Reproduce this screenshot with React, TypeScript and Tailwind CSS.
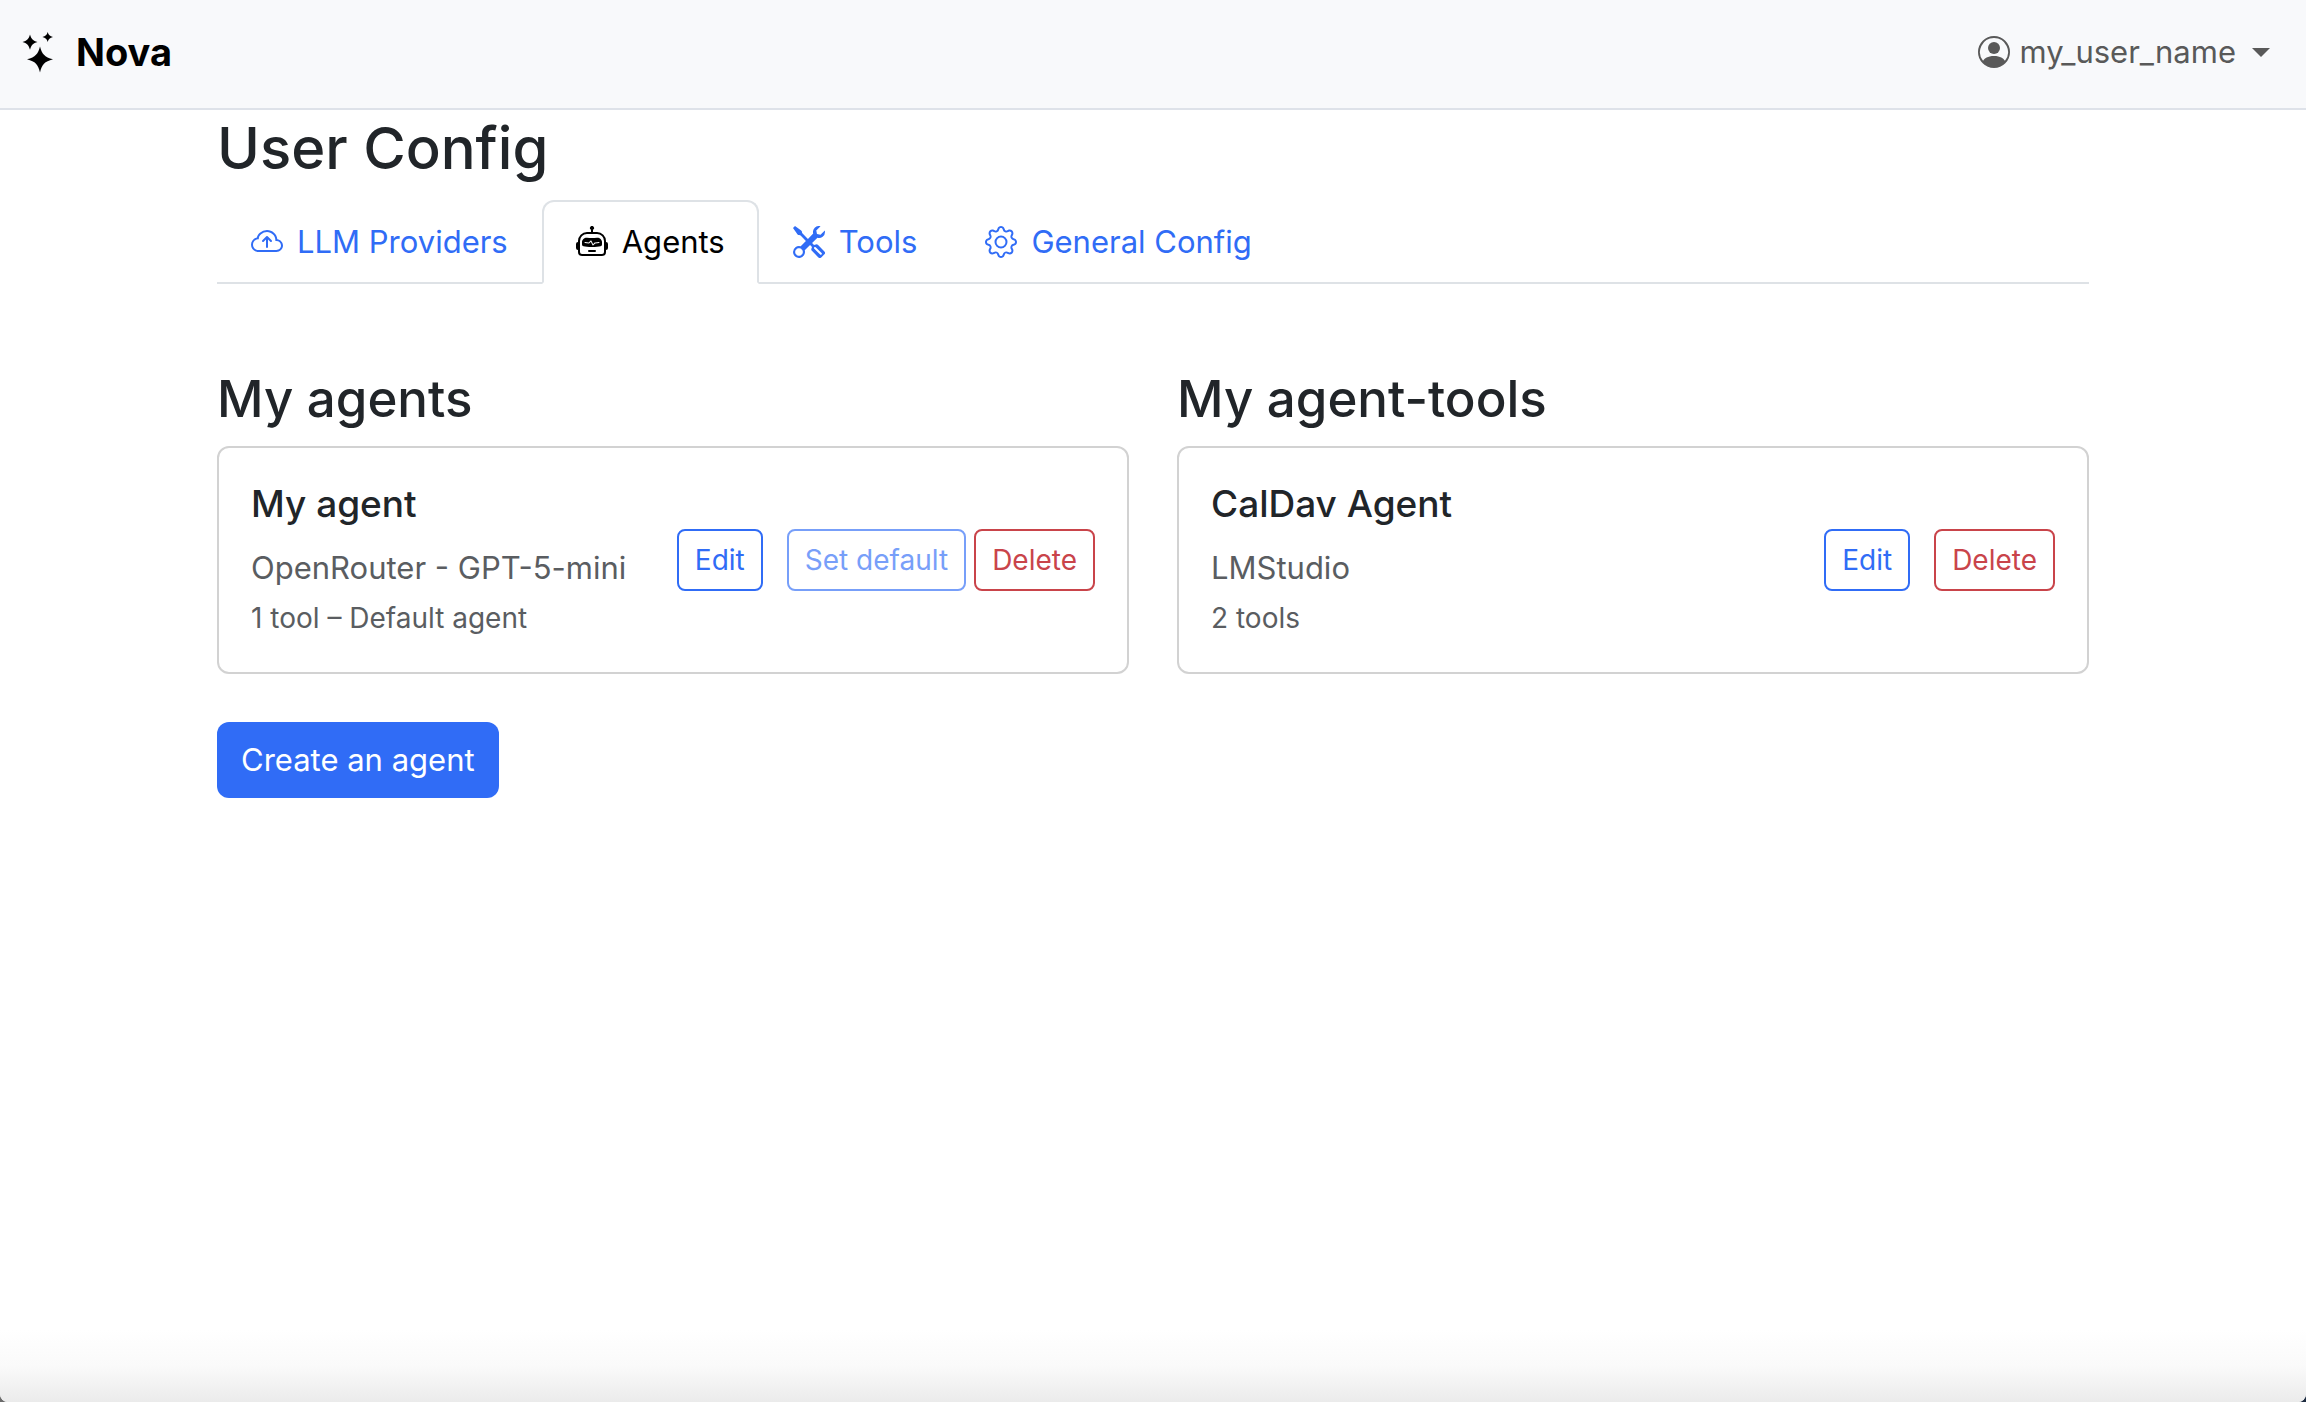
import React from "react";
import type { ReactNode } from "react";
import { BsCloudArrowUp, BsGear, BsPersonCircle, BsRobot, BsTools } from "react-icons/bs";

type Agent = {
  name: string;
  provider: string;
  summary: string;
  canBeDefault?: boolean;
};

const agents: Agent[] = [
  { name: "My agent", provider: "OpenRouter - GPT-5-mini", summary: "1 tool – Default agent", canBeDefault: true },
];

const agentTools: Agent[] = [{ name: "CalDav Agent", provider: "LMStudio", summary: "2 tools" }];

const tabs: { label: string; href: string; icon: ReactNode; active?: boolean }[] = [
  { label: "LLM Providers", href: "#providers", icon: <BsCloudArrowUp aria-hidden="true" /> },
  { label: "Agents", href: "#agents", icon: <BsRobot aria-hidden="true" />, active: true },
  { label: "Tools", href: "#tools", icon: <BsTools aria-hidden="true" /> },
  { label: "General Config", href: "#general", icon: <BsGear aria-hidden="true" /> },
];

function NovaLogo() {
  return (
    <svg className="h-[42px] w-8 shrink-0" viewBox="0 0 32 42" fill="currentColor" aria-hidden="true">
      <path d="M18 15.5C19.8 23 22.5 26 31 28.3C22.5 30.6 19.8 33.6 18 41.5C16.2 33.6 13.5 30.6 5 28.3C13.5 26 16.2 23 18 15.5Z" />
      <path d="M8 3.5C9.2 8 11.2 9.7 15.5 11C11.2 12.3 9.2 14 8 18.8C6.8 14 4.8 12.3 0.5 11C4.8 9.7 6.8 8 8 3.5Z" />
      <path d="M25.7 1C26.5 4 27.8 5.1 31 6C27.8 6.9 26.5 8 25.7 11C24.9 8 23.6 6.9 20.4 6C23.6 5.1 24.9 4 25.7 1Z" />
    </svg>
  );
}

function Header() {
  return (
    <header className="flex items-center justify-between border-b-2 border-[#dee2e9] bg-[#f8f9fb] pt-4 pr-9 pb-5 pl-[22px]">
      <a href="#home" className="flex items-center gap-[22px] text-[38px] leading-[72px] font-bold text-black">
        <NovaLogo />
        Nova
      </a>
      <button type="button" aria-haspopup="menu" className="flex items-center text-[31px] leading-[48px] text-[#595959]">
        <BsPersonCircle className="mr-2.5 size-8" aria-hidden="true" />
        my_user_name
        <svg className="ml-4 h-[9px] w-[18px]" viewBox="0 0 18 9" fill="currentColor" aria-hidden="true">
          <path d="M0 0H18L9 9Z" />
        </svg>
      </button>
    </header>
  );
}

function Tabs() {
  return (
    <nav aria-label="User config" className="flex border-b-2 border-[#dee2e6]">
      {tabs.map((tab) => (
        <a
          key={tab.label}
          href={tab.href}
          aria-current={tab.active ? "page" : undefined}
          className={
            "-mb-0.5 flex items-center gap-3.5 rounded-t-xl border-2 px-8 py-4 text-[31px] leading-[48px] " +
            (tab.active
              ? "border-[#dee2e6] border-b-white bg-white text-black"
              : "border-transparent text-[#306cf6]")
          }
        >
          <span className="[&>svg]:size-8">{tab.icon}</span>
          {tab.label}
        </a>
      ))}
    </nav>
  );
}

const smallButton = "rounded-lg border-2 px-4 py-2 text-[28px] leading-[42px]";

function AgentCard({ agent }: { agent: Agent }) {
  return (
    <article className="flex items-center justify-between rounded-xl border-2 border-[#d2d2d2] p-8">
      <div>
        <h3 className="mb-4 text-[37px] leading-[48px] font-medium text-[#212529]">{agent.name}</h3>
        <p className="text-[31px] leading-[48px] text-[#5a5d61]">{agent.provider}</p>
        <p className="mt-1 text-[28px] leading-[44px] text-[#5a5d61]">{agent.summary}</p>
      </div>
      <div className="flex items-center gap-2">
        <button type="button" className={smallButton + " mr-4 border-[#306cf6] text-[#306cf6]"}>
          Edit
        </button>
        {agent.canBeDefault && (
          <button type="button" disabled className={smallButton + " border-[#306cf6] text-[#306cf6] opacity-65"}>
            Set default
          </button>
        )}
        <button type="button" className={smallButton + " border-[#c9444a] text-[#c9444a]"}>
          Delete
        </button>
      </div>
    </article>
  );
}

function AgentSection({ title, items }: { title: string; items: Agent[] }) {
  return (
    <section>
      <h2 className="mb-3 text-[51px] leading-[70px] font-medium text-[#212529]">{title}</h2>
      {items.map((agent) => (
        <AgentCard key={agent.name} agent={agent} />
      ))}
    </section>
  );
}

export default function App() {
  return (
    <div className="bg-linear-to-r from-[#6b6b6b] to-[#1d2b40] font-[Inter,'Liberation_Sans',sans-serif]">
      <div className="flex min-h-screen flex-col overflow-hidden rounded-b-lg bg-white">
        <Header />
        <main className="mx-auto w-full max-w-[1920px] px-6">
          <h1 className="mb-3.5 text-[58px] leading-[76px] font-medium text-[#212529]">User Config</h1>
          <Tabs />
          <div className="mt-20 grid grid-cols-2 gap-12">
            <AgentSection title="My agents" items={agents} />
            <AgentSection title="My agent-tools" items={agentTools} />
          </div>
          <button type="button" className="mt-12 rounded-xl bg-[#306cf6] px-6 py-3.5 text-[31px] leading-[48px] text-white">
            Create an agent
          </button>
        </main>
        <div className="mt-auto h-[72px] bg-linear-to-b from-white via-[#fafafa] to-[#ebebeb]" />
      </div>
    </div>
  );
}
